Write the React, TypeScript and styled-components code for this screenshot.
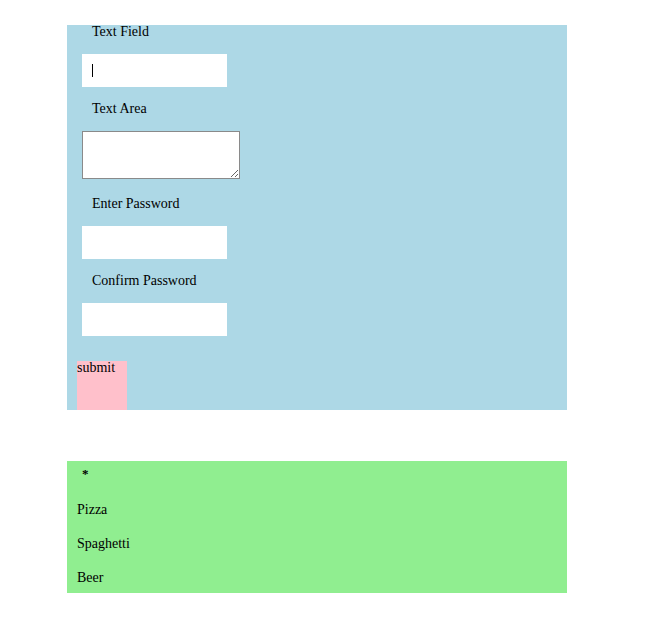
import React from "react";
import styled, { createGlobalStyle } from "styled-components";

const Global = createGlobalStyle`
  html, body { margin: 0; padding: 0; background: #ffffff; }
  body { font-family: "Liberation Serif", "Times New Roman", serif; font-size: 14px; color: #000; }
`;

const Page = styled.div`
  display: flex;
  flex-direction: column;
  align-items: flex-start;
  padding: 25px 0 0 67px;
  gap: 51px;
`;

const FormPanel = styled.form`
  width: 500px;
  background: #add8e6;
  display: flex;
  flex-direction: column;
  align-items: flex-start;
`;

const Label = styled.label<{ $top?: number }>`
  display: block;
  line-height: 18px;
  height: 16px;
  padding-left: 25px;
  margin-top: ${(p) => (p.$top ?? 0)}px;
  margin-bottom: 15px;
`;

const FieldWrap = styled.div<{ $after: number }>`
  position: relative;
  margin-left: 15px;
  margin-bottom: ${(p) => p.$after}px;
`;

const Input = styled.input`
  display: block;
  box-sizing: border-box;
  width: 145px;
  height: 33px;
  border: none;
  outline: none;
  background: #ffffff;
  padding: 0 10px;
  font-family: inherit;
  font-size: 14px;
`;

const Caret = styled.span`
  position: absolute;
  left: 10px;
  top: 10px;
  width: 1px;
  height: 13px;
  background: #000;
`;

const TextArea = styled.textarea`
  display: block;
  box-sizing: border-box;
  width: 158px;
  height: 48px;
  margin: 0;
  border: 1px solid #8a8a8a;
  background: #ffffff;
  padding: 2px;
  font-family: inherit;
  font-size: 14px;
`;

const Submit = styled.button`
  display: flex;
  align-items: flex-start;
  box-sizing: border-box;
  width: 50px;
  height: 49px;
  margin: 25px 0 0 10px;
  padding: 0;
  border: none;
  background: #ffc0cb;
  font-family: "Liberation Serif", "Times New Roman", serif;
  font-size: 14px;
  line-height: 14px;
  color: #000;
`;

const MenuPanel = styled.div`
  width: 500px;
  height: 132px;
  box-sizing: border-box;
  background: #90ee90;
  display: flex;
  flex-direction: column;
  gap: 18px;
  padding: 5px 0 0 10px;
`;

const Star = styled.div`
  font-weight: bold;
  font-size: 13px;
  line-height: 16px;
  height: 16px;
  padding-left: 5px;
  margin-bottom: 2px;
`;

const Item = styled.div`
  line-height: 16px;
  height: 16px;
`;

export default function App() {
  return (
    <>
      <Global />
      <Page>
        <FormPanel onSubmit={(e) => e.preventDefault()}>
          <Label $top={-2}>Text Field</Label>
          <FieldWrap $after={13}>
            <Input type="text" />
            <Caret />
          </FieldWrap>
          <Label>Text Area</Label>
          <FieldWrap $after={16}>
            <TextArea />
          </FieldWrap>
          <Label>Enter Password</Label>
          <FieldWrap $after={13}>
            <Input type="password" />
          </FieldWrap>
          <Label>Confirm Password</Label>
          <FieldWrap $after={0}>
            <Input type="password" />
          </FieldWrap>
          <Submit type="submit">submit</Submit>
        </FormPanel>
        <MenuPanel>
          <Star>*</Star>
          <Item>Pizza</Item>
          <Item>Spaghetti</Item>
          <Item>Beer</Item>
        </MenuPanel>
      </Page>
    </>
  );
}
